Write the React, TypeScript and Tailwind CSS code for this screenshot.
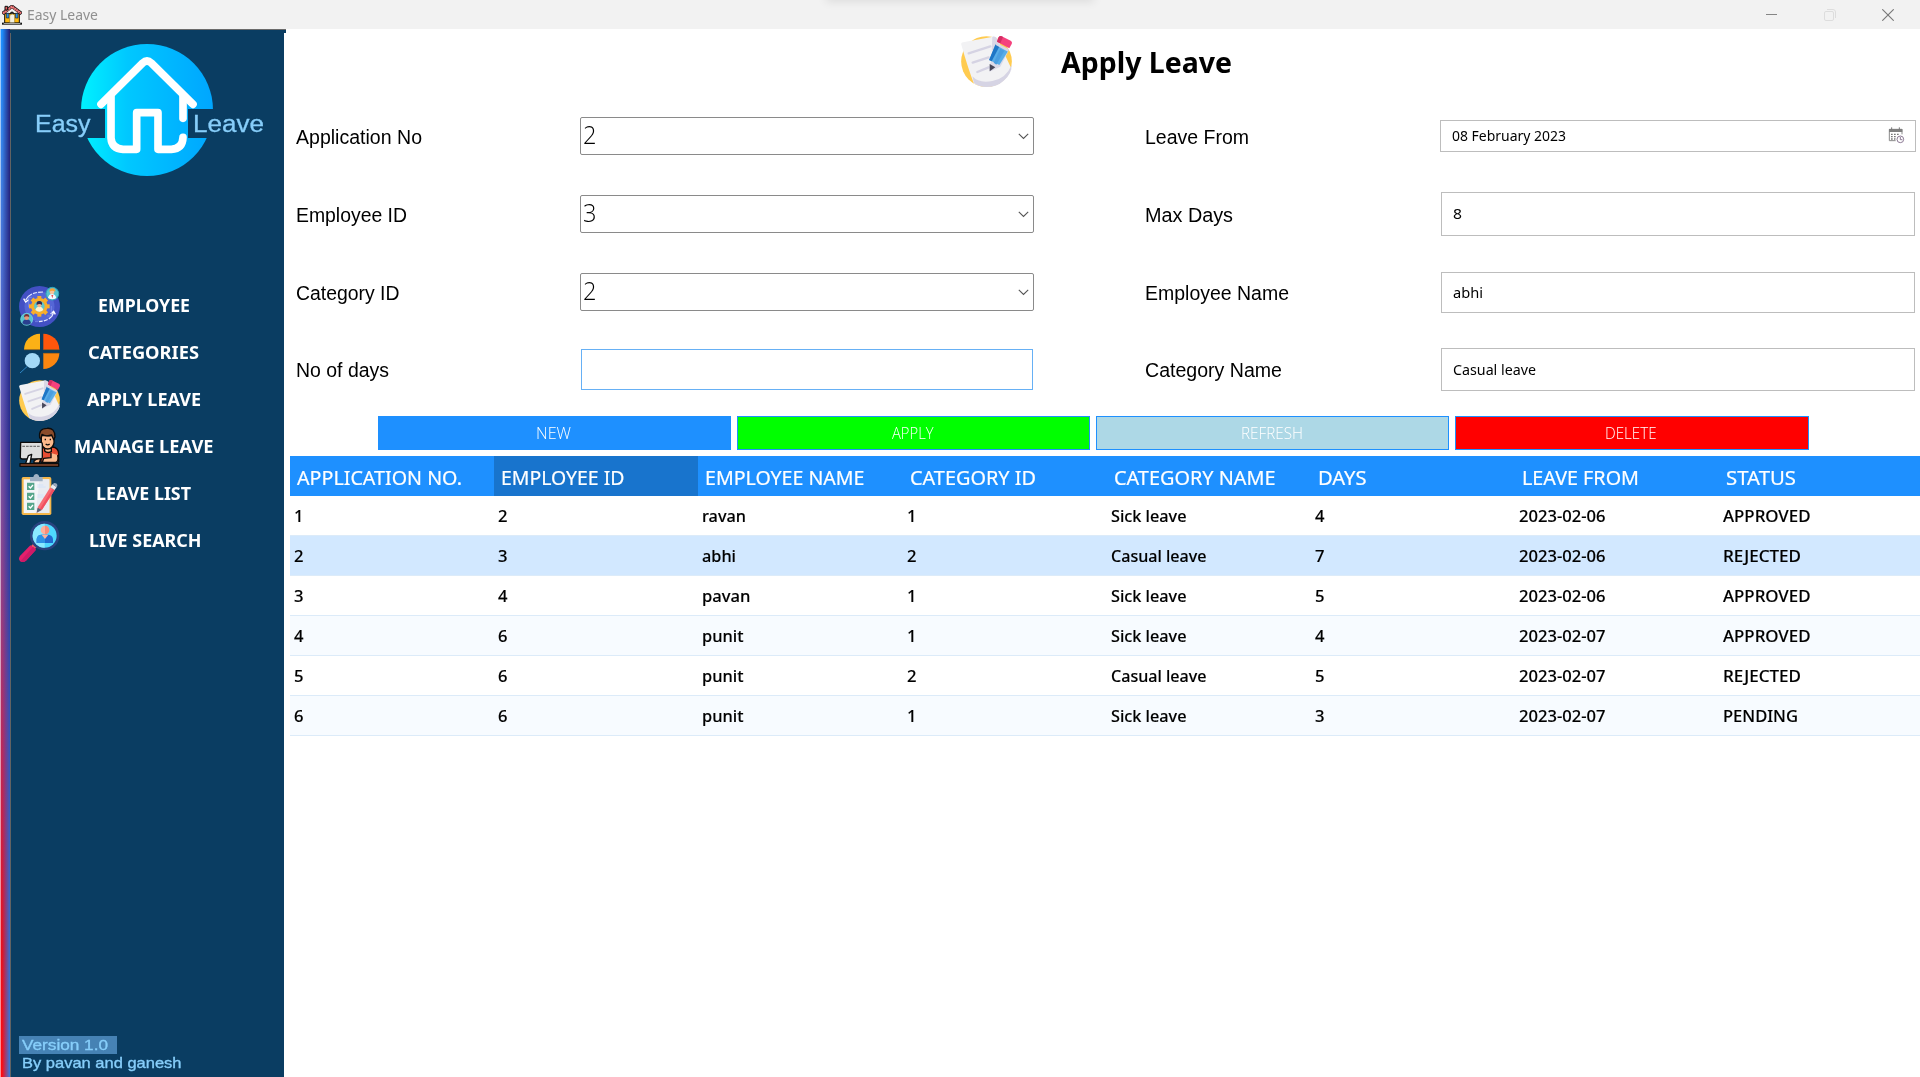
import { useLayoutEffect, useRef, useState } from "react";

type FitProps = { w: number; className?: string; children: string };

/** Single line of text condensed or expanded horizontally to a given advance width. */
function Fit({ w, className = "", children }: FitProps) {
  const ref = useRef<HTMLSpanElement>(null);
  const [scale, setScale] = useState(1);
  useLayoutEffect(() => {
    if (ref.current) setScale(w / parseFloat(getComputedStyle(ref.current).width));
  }, [w, children]);
  return (
    <span className={"block shrink-0 " + className} style={{ width: w }}>
      <span
        ref={ref}
        className="inline-block origin-left whitespace-nowrap"
        style={{ transform: `scaleX(${scale})` }}
      >
        {children}
      </span>
    </span>
  );
}

function HouseIcon() {
  return (
    <svg width="20" height="20" viewBox="0 0 60 60">
      <path d="M8 26h44v28H8z" fill="#fdb913" stroke="#111" strokeWidth="3" />
      <path d="M1 26 30 4l29 22" fill="none" stroke="#111" strokeWidth="10" />
      <path d="M3 25 30 5l27 20" fill="none" stroke="#f2797b" strokeWidth="7" strokeDasharray="6 1" />
      <path d="M9 4h8v11H9z" fill="#e06060" stroke="#111" strokeWidth="3" />
      <path d="M13 25h8v14h-8zM40 25h8v14h-8z" fill="#2d8fe0" stroke="#222" strokeWidth="2" />
      <path d="M23 54V32q8-10 15 0v22z" fill="#f4f0e0" stroke="#9b7a20" strokeWidth="2" />
      <path d="M25 26q5-9 10 0" fill="none" stroke="#111" strokeWidth="4" />
      <path d="M0 53h60v6H0z" fill="#111" />
      <path d="M5 55h50v2H5z" fill="#eee" />
    </svg>
  );
}

function EmployeeIcon() {
  return (
    <svg width="41" height="41" viewBox="0 0 123 123">
      <circle cx="61.500" cy="61.500" r="61.500" fill="#4350c4" />
      <circle cx="61.500" cy="61.500" r="45" fill="#5566d6" />
      <path d="M20 42Q32 18 72 18" fill="none" stroke="#e9ecff" strokeWidth="3.500" strokeDasharray="26 4 12 4" />
      <path d="m14 38 6 10 9-7" fill="none" stroke="#fff" strokeWidth="4" />
      <path d="M104 78q-6 26-44 29" fill="none" stroke="#e9ecff" strokeWidth="3.500" strokeDasharray="26 4 12 4" />
      <path d="m95 84 9-8 5 9" fill="none" stroke="#fff" strokeWidth="4" />
      <path d="M38 34h-9v30M85 90h12V60M48 107h10" fill="none" stroke="#8793ee" strokeWidth="2" />
      <g fill="#f9ae2b">
        <circle cx="61" cy="61" r="25" />
        <path d="M55 30h12v62H55z" />
        <path d="M30 55h62v12H30z" />
        <path d="M55 30h12v62H55z" transform="rotate(45 61 61)" />
        <path d="M55 30h12v62H55z" transform="rotate(-45 61 61)" />
      </g>
      <circle cx="61" cy="61" r="16" fill="#5cc5cf" />
      <path d="M49 72q2-10 12-10t12 10q-12 10-24 0" fill="#fff2cf" />
      <circle cx="61" cy="57" r="7" fill="#f4b58c" />
      <path d="M53 57q-2-12 8-12t8 12q-7-6-16 0" fill="#342b4f" />
      <circle cx="100" cy="23" r="19" fill="#56c3cf" stroke="#2fa5bb" strokeWidth="3" />
      <path d="M87 36q2-12 12-12t13 12q-12 8-25 0" fill="#f5f7ff" />
      <path d="m97 27 3 10 3-10" fill="#e64c4c" />
      <circle cx="99" cy="18" r="7" fill="#f8c49b" />
      <path d="M91 17q0-10 9-10t9 10q-9-6-18 0" fill="#f6a13a" />
      <circle cx="23" cy="100" r="18" fill="#56c3cf" stroke="#7fe0e4" strokeWidth="2" />
      <path d="M10 112q2-12 13-12t13 12q-12 9-26 0" fill="#2a3f8f" />
      <circle cx="23" cy="95" r="7" fill="#e59a78" />
      <path d="M15 94q0-10 8-10t8 10q-8-6-16 0" fill="#7a2f35" />
    </svg>
  );
}

function CategoriesIcon() {
  return (
    <svg width="41" height="41" viewBox="0 0 123 123">
      <path d="M15 50A48 48 0 0 1 63 2v48z" fill="#fbb116" />
      <path d="M73 2a48 48 0 0 1 48 48H73z" fill="#ff560c" />
      <path d="M73 60h48a48 48 0 0 1-48 48z" fill="#fb860f" />
      <path d="M15 50h48M73 50h48M73 61h47" stroke="#8a5a20" strokeWidth="2" />
      <path d="M3 120 24 101" stroke="#2f86c4" strokeWidth="3" />
      <circle cx="40" cy="83" r="23" fill="#a3d8f6" />
    </svg>
  );
}

function ApplyIcon({ size }: { size: number }) {
  return (
    <svg width={size} height={size} viewBox="0 0 153 153">
      <circle cx="76.500" cy="76.500" r="76" fill="#ffcb4f" />
      <path d="M1 26q-2-6 5-7L96 2q10-2 14 8l42 90q-10 28-38 43-38 18-75 0Q22 100 1 26z" fill="#f2f2f4" />
      <path d="M94 2q10-2 14 6l12 24-28 12z" fill="#d9d7e6" />
      <path d="M34 121q20 22 60 14 42-8 58-49 0 28-24 48-20 19-52 19-22 0-37-12z" fill="#d6d4e4" />
      <path d="m23 52 65-21M35 80l48-16M49 108l34-14" stroke="#d5d3e3" strokeWidth="7" strokeLinecap="round" />
      <path d="m86 88 18-50 38 8-24 46-32 15z" fill="#dcdae8" />
      <path d="m104 24 38 20-27 43-30-15z" fill="#58ade8" />
      <path d="m104 24 12 6-24 46-8-4z" fill="#1e76c6" />
      <path d="m118 38 12 6-24 42-8-6z" fill="#4a9ee0" />
      <path d="m106 20 38 20-3 7-38-21z" fill="#d7d5e5" />
      <path d="M112 5q3-7 10-4l27 13q6 4 3 10l-7 13-37-20z" fill="#f5417d" />
      <path d="M112 5q3-7 10-4l4 2-8 19-10-5z" fill="#d32d63" />
      <path d="m86 84 17 10-17 12z" fill="#464659" />
    </svg>
  );
}

function ManageIcon() {
  return (
    <svg width="41" height="41" viewBox="0 0 123 123" stroke="#0c0c0c" strokeWidth="4" strokeLinejoin="round">
      <path d="M66 106V74q0-13 15-14h20q17 2 18 20v25z" fill="#e94d33" />
      <path d="M97 60v14q-12 6-20-2V60z" fill="#fcb98c" />
      <path d="M67 26h38v22q-4 18-19 18T67 48z" fill="#fcb98c" />
      <path d="M62 32Q58 4 84 4q24-2 24 26l-4 8-6-14q-18 6-29-2l-3 14z" fill="#8a4b2a" />
      <path d="M79 35v5M94 35v5M80 51q6 5 12 0" fill="none" />
      <path d="M116 84q4 20-6 22H70l4-12 22-2V78" fill="#fcb98c" />
      <path d="M5 46h60q5 0 5 5v40q0 5-5 5H10q-6 0-6-5z" fill="#dedede" />
      <path d="M10 58h54" stroke="#777" strokeDasharray="8 3" />
      <path d="m28 86 10-4-5 27H20z" fill="#f8f8f8" />
      <path d="M45 102q6-8 20-6l-4 12H45z" fill="#fcb98c" />
      <path d="M3 110h116v8H3z" fill="#8a482b" />
    </svg>
  );
}

function ListIcon() {
  return (
    <svg width="41" height="41" viewBox="0 0 123 123">
      <rect x="8" y="9" width="89" height="114" rx="5" fill="#f4b64a" />
      <path d="M14 16h77v101H14z" fill="#f4f5f8" />
      <path d="M62 16h29v101H50z" fill="#e8ebf1" />
      <path d="M33 9h10q2-9 9-9t9 9h10v13H33z" fill="#9fb1c4" />
      <path d="M24 26h22v22H24zM24 56h22v22H24zM24 86h22v22H24z" fill="#56a58b" />
      <path d="m29 37 5 5 8-9M29 67l5 5 8-9M29 97l5 5 8-9" fill="none" stroke="#fff" strokeWidth="4" />
      <path d="M55 33h18M55 39h25M55 63h18M55 69h25" stroke="#d3e2f8" strokeWidth="3" />
      <path d="m94 40 13 8-38 59-16 9 4-18z" fill="#f76b74" />
      <path d="m101 44 6 4-38 59-6-3z" fill="#f04f60" />
      <path d="m56 101 12 7-15 8z" fill="#566579" />
      <path d="m94 40 6-9 13 8-6 9z" fill="#e6e9ee" />
      <path d="m100 31 6-4q10 0 9 9l-2 4z" fill="#96a8bb" />
    </svg>
  );
}

function SearchIcon() {
  return (
    <svg width="41" height="41" viewBox="0 0 123 123">
      <path d="m36 75 11-11 11 11-13 11z" fill="#ef5b63" />
      <path d="M34 73 5 103q-9 10-2 17 8 6 18-1l30-33z" fill="#e5206c" />
      <path d="m51 86-30 33q-10 7-17 2l38-44z" fill="#cf1a67" />
      <circle cx="77" cy="44" r="44" fill="#29437f" />
      <circle cx="77" cy="44" r="36" fill="#4ed8ff" />
      <path d="M77 8a36 36 0 0 0 0 72z" fill="#8be9ff" />
      <path d="M53 66V54q2-13 15-13h20q12 1 14 13v12z" fill="#2369cf" />
      <path d="M53 66V54q2-13 15-13h10v25z" fill="#2d93e6" />
      <path d="m68 41 10 13 10-13z" fill="#ffb09a" />
      <circle cx="78" cy="27" r="13" fill="#ffb09a" />
      <path d="M78 14a13 13 0 0 1 0 26z" fill="#f98c78" />
    </svg>
  );
}

function CalendarIcon() {
  return (
    <svg width="17" height="17" viewBox="0 0 51 51" fill="none">
      <path d="M23 41H4V7h38v15" stroke="#8a8a8a" strokeWidth="3" />
      <path d="M3 6h40v9H3z" fill="#808080" />
      <path d="M11 1v8M34 1v8" stroke="#777" strokeWidth="3" />
      <path d="M9 22h26M9 29h16M9 36h14" stroke="#777" strokeWidth="4" strokeDasharray="5 4" />
      <circle cx="37" cy="37" r="14" fill="#fff" />
      <circle cx="37" cy="37" r="10" stroke="#8c7a94" strokeWidth="3" />
      <path d="M37 30v8h6" stroke="#8c7a94" strokeWidth="3" />
    </svg>
  );
}

const NAV = [
  { label: "EMPLOYEE", w: 92, pad: "", icon: <EmployeeIcon /> },
  { label: "CATEGORIES", w: 111, pad: "", icon: <CategoriesIcon /> },
  { label: "APPLY LEAVE", w: 114, pad: "", icon: <ApplyIcon size={41} /> },
  { label: "MANAGE LEAVE", w: 139.5, pad: "", icon: <ManageIcon /> },
  { label: "LEAVE LIST", w: 95, pad: "", icon: <ListIcon /> },
  { label: "LIVE SEARCH", w: 112.5, pad: "pl-[3px]", icon: <SearchIcon /> },
];

function TitleBar() {
  return (
    <header className="relative flex h-[29px] shrink-0 items-center overflow-hidden bg-[#f2f2f2]">
      <div className="absolute top-[-8px] left-[828px] h-2 w-[264px] shadow-[0_0_10px_2px_rgba(0,0,0,0.09)]" />
      <div className="ml-[2px] w-[25px]">
        <HouseIcon />
      </div>
      <Fit w={71} className="text-[15px] leading-[29px] text-[#909090]">Easy Leave</Fit>
      <div className="mr-[26px] ml-auto flex items-start gap-[46px]">
        <svg width="12" height="12" viewBox="0 0 12 12">
          <path d="M-1 5.500h12" stroke="#858585" />
        </svg>
        <svg width="12" height="12" viewBox="0 0 12 12" fill="none" stroke="#dddddd">
          <rect x=".5" y="2.500" width="9" height="9" rx="1.500" />
          <path d="M3 .5h6q2.500 0 2.500 2.500v6" />
        </svg>
        <svg width="12" height="12" viewBox="0 0 12 12">
          <path d="m.3.3 11.400 11.400M11.700.3.300 11.700" stroke="#777" strokeWidth="1.100" />
        </svg>
      </div>
    </header>
  );
}

function Logo() {
  return (
    <div className="relative h-[132px] w-[273px]">
      <svg className="absolute top-0 left-[70px]" width="132" height="132" viewBox="243 132 396 396">
        <defs>
          <linearGradient id="disc">
            <stop offset="0" stopColor="#00f2ff" />
            <stop offset=".35" stopColor="#00c8ff" />
            <stop offset="1" stopColor="#00a6ff" />
          </linearGradient>
        </defs>
        <circle cx="441" cy="330" r="198" fill="url(#disc)" />
        <path d="M243 327h72v87h-72zM564 327h75v87h-75z" fill="#0a3d62" />
        <g fill="none" stroke="#fff" strokeWidth="23" strokeLinecap="round" strokeLinejoin="round">
          <path d="M303 313 428 189q13-12 26 0l125 124" />
          <path d="M333 290v124q2 32 36 34h41V338h64v110h40q34-2 35-36" />
          <path d="M549 290v65" />
        </g>
      </svg>
      <div className="absolute top-[66px] left-[24px] font-['Liberation_Sans'] text-[23.500px] leading-[29px] text-[#87cefa] [-webkit-text-stroke:0.3px_#87cefa]">
        <Fit w={55.5}>Easy</Fit>
      </div>
      <div className="absolute top-[66px] left-[181.500px] font-['Liberation_Sans'] text-[23.500px] leading-[29px] text-[#87cefa] [-webkit-text-stroke:0.3px_#87cefa]">
        <Fit w={71}>Leave</Fit>
      </div>
    </div>
  );
}

function Sidebar() {
  return (
    <aside className="relative flex w-[284px] shrink-0">
      <div className="absolute top-0 left-[10px] h-1 w-[276px] border-t border-[#6b6b6b] bg-[#0a3d62]" />
      <div className="relative w-[10px] bg-[linear-gradient(180deg,#1e90ff_0%,#3f7de0_15%,#5a5fc0_32%,#8a4590_50%,#c02555_70%,#e8101c_88%,#ff0a10_100%)]">
        <div className="absolute inset-0 bg-[linear-gradient(180deg,#23227a_0%,#2b2f90_40%,#3550b8_65%,#3b78d8_100%)] [mask-image:linear-gradient(90deg,transparent_20%,black_95%)]" />
        <div className="absolute inset-y-0 left-0 w-px bg-white/55" />
      </div>
      <div className="w-px bg-[#626262]" />
      <div className="flex w-[273px] flex-col bg-[#0a3d62] pt-[15px]">
        <Logo />
        <nav className="mt-[107px]">
          {NAV.map((n) => (
            <a key={n.label} className="flex h-[47px] items-center pl-2">
              {n.icon}
              <span className={"flex w-[167px] justify-center pb-[3px] text-[17.500px] font-bold text-white " + n.pad}>
                <Fit w={n.w}>{n.label}</Fit>
              </span>
            </a>
          ))}
        </nav>
        <footer className="mt-auto mb-[5px] ml-2 font-['Liberation_Sans'] text-[15px] leading-[18px] text-[#87cefa] [-webkit-text-stroke:0.35px_#87cefa]">
          <div className="w-[98px] bg-[#4682b4] pl-[3px]">
            <Fit w={86}>Version 1.0</Fit>
          </div>
          <div className="pl-[3px]">
            <Fit w={159.5}>By pavan and ganesh</Fit>
          </div>
        </footer>
      </div>
    </aside>
  );
}

function Combo({ value }: { value: string }) {
  return (
    <div className="flex h-[38px] w-[454px] items-center justify-between rounded-[2px] border border-[#8a8a8a] pr-[4px] pl-[2px]">
      <span className="pb-[4px] font-['Open_Sans'] text-[25px] leading-[32px] font-light">
        <Fit w={13.5}>{value}</Fit>
      </span>
      <svg width="11" height="7" viewBox="0 0 11 7" fill="none">
        <path d="m.8.8 4.700 4.700L10.200.8" stroke="#555" strokeWidth="1.100" />
      </svg>
    </div>
  );
}

type Row = {
  label: string;
  w: number;
  value?: string;
  right: string;
  rw: number;
  rvalue: string;
  rvw: number;
  row: string;
  box: string;
};

const ROWS: Row[] = [
  { label: "Application No", w: 126, value: "2", right: "Leave From", rw: 104, rvalue: "08 February 2023", rvw: 114, row: "h-[78px]", box: "w-[476px] h-8 justify-between pr-[10px] pb-[2px]" },
  { label: "Employee ID", w: 111, value: "3", right: "Max Days", rw: 88, rvalue: "8", rvw: 9, row: "h-[78px]", box: "ml-px w-[474px] h-[44px] pb-[2px]" },
  { label: "Category ID", w: 103.5, value: "2", right: "Employee Name", rw: 144, rvalue: "abhi", rvw: 30, row: "h-[78px]", box: "ml-px w-[474px] h-[41px]" },
  { label: "No of days", w: 93, right: "Category Name", rw: 137, rvalue: "Casual leave", rvw: 83, row: "h-[77px]", box: "ml-px w-[474px] h-[43px]" },
];

function Form() {
  return (
    <form>
      {ROWS.map((r) => (
        <div key={r.label} className={"flex items-center pl-3 " + r.row}>
          <div className="w-[284px] pt-px font-['Liberation_Sans'] text-[20px]">
            <Fit w={r.w}>{r.label}</Fit>
          </div>
          <div className="w-[454px]">
            {r.value ? <Combo value={r.value} /> : <div className="ml-px h-[41px] w-[452px] border border-[#66b0f5]" />}
          </div>
          <div className="ml-[111px] w-[295px] pt-px font-['Liberation_Sans'] text-[20px]">
            <Fit w={r.rw}>{r.right}</Fit>
          </div>
          <div className={"flex items-center border border-[#bdbdbd] pl-[11px] text-[15px] leading-5 " + r.box}>
            <Fit w={r.rvw} className="pb-px">{r.rvalue}</Fit>
            {r.right === "Leave From" && <CalendarIcon />}
          </div>
        </div>
      ))}
    </form>
  );
}

const BUTTONS = [
  { label: "NEW", w: 35, color: "w-[353px] bg-[#1e90ff] pr-[4px]" },
  { label: "APPLY", w: 41.5, color: "w-[353px] bg-[#00ff00] pr-[2px]" },
  { label: "REFRESH", w: 62, color: "w-[353px] bg-[#add8e6] pr-[2px]" },
  { label: "DELETE", w: 51.5, color: "w-[354px] bg-[#ff0000] pr-[2px]" },
];

const HEADERS: [string, number][] = [
  ["APPLICATION NO.", 165],
  ["EMPLOYEE ID", 123.5],
  ["EMPLOYEE NAME", 159.5],
  ["CATEGORY ID", 126],
  ["CATEGORY NAME", 161.5],
  ["DAYS", 48.5],
  ["LEAVE FROM", 117],
  ["STATUS", 70],
];

const DATA = [
  ["1", "2", "ravan", "1", "Sick leave", "4", "2023-02-06", "APPROVED"],
  ["2", "3", "abhi", "2", "Casual leave", "7", "2023-02-06", "REJECTED"],
  ["3", "4", "pavan", "1", "Sick leave", "5", "2023-02-06", "APPROVED"],
  ["4", "6", "punit", "1", "Sick leave", "4", "2023-02-07", "APPROVED"],
  ["5", "6", "punit", "2", "Casual leave", "5", "2023-02-07", "REJECTED"],
  ["6", "6", "punit", "1", "Sick leave", "3", "2023-02-07", "PENDING"],
];

const CELL_WIDTHS: Record<string, number> = {
  ravan: 44,
  abhi: 34,
  pavan: 48.5,
  punit: 41.5,
  "Sick leave": 75.5,
  "Casual leave": 95.5,
  "2023-02-06": 86.5,
  "2023-02-07": 86.5,
  APPROVED: 87.5,
  REJECTED: 78,
  PENDING: 75,
};

function Table() {
  return (
    <section className="mt-[6px] ml-[6px] overflow-hidden">
      <div className="flex h-10 bg-[#1e90ff] text-[19.500px] leading-[43px] text-white [-webkit-text-stroke:0.2px_white]">
        {HEADERS.map(([h, w], i) => (
          <div key={h} className={i === 1 ? "w-[204.200px] shrink-0 bg-[#1874cd] pl-[7px]" : "w-[204.200px] shrink-0 pl-[7px]"}>
            <Fit w={w}>{h}</Fit>
          </div>
        ))}
      </div>
      {DATA.map((row, i) => (
        <div
          key={row[0]}
          className={
            "flex h-10 border-b border-[#dcebf9] text-[17px] leading-[40px] font-medium text-black [-webkit-text-stroke:0.15px_black] " +
            (i === 1 ? "bg-[#d2e8ff]" : i % 2 ? "bg-[#f7fbff]" : "bg-white")
          }
        >
          {row.map((c, j) => (
            <div key={j} className="w-[204.200px] shrink-0 pl-1">
              <Fit w={CELL_WIDTHS[c] ?? 9.5}>{c}</Fit>
            </div>
          ))}
        </div>
      ))}
    </section>
  );
}

export default function App() {
  return (
    <div className="flex h-[1077px] w-[1920px] flex-col overflow-hidden bg-white font-['Noto_Sans',sans-serif] text-black">
      <TitleBar />
      <div className="flex min-h-0 flex-1">
        <Sidebar />
        <main className="min-w-0 flex-1">
          <div className="flex h-[68px] items-center pb-[3px] pl-[677px]">
            <ApplyIcon size={51} />
            <h1 className="ml-[49px] pt-px text-[29px] leading-10 font-bold">
              <Fit w={171}>Apply Leave</Fit>
            </h1>
          </div>
          <Form />
          <div className="mt-2 flex gap-[6px] pl-[94px]">
            {BUTTONS.map((b) => (
              <button
                key={b.label}
                type="button"
                className={"flex h-[34px] items-center justify-center border border-[#1e90ff] pt-[2px] font-['Open_Sans'] text-[15.500px] font-light text-white " + b.color}
              >
                <Fit w={b.w}>{b.label}</Fit>
              </button>
            ))}
          </div>
          <Table />
        </main>
      </div>
    </div>
  );
}
